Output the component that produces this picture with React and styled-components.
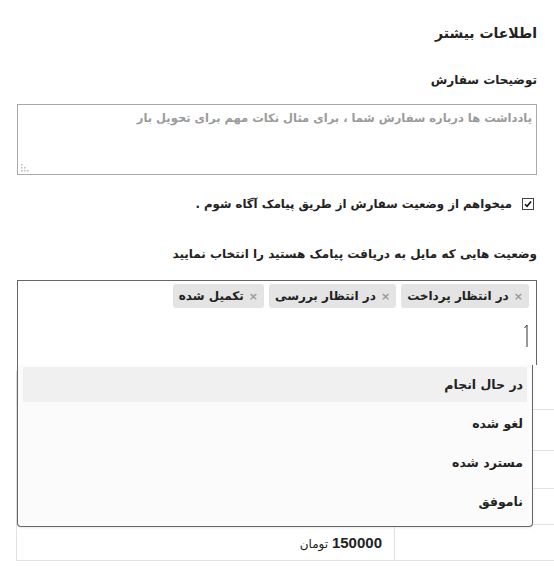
import React from "react";
import styled, { createGlobalStyle } from "styled-components";

const GlobalStyle = createGlobalStyle`
  html, body {
    margin: 0;
    padding: 0;
    background: #fff;
    overflow: hidden;
  }
  body {
    font-family: "DejaVu Sans", "Noto Sans", sans-serif;
    color: #222;
  }
`;

const Page = styled.div`
  direction: rtl;
  width: 520px;
  padding: 21px 17px 0 17px;
`;

const Title = styled.h3`
  margin: 0;
  font-size: 14px;
  line-height: 24px;
  font-weight: 700;
  color: #222;
`;

const FieldLabel = styled.label`
  display: block;
  margin: ${(p) => p.$mt || 0}px 0 0;
  font-size: 12px;
  line-height: 22px;
  font-weight: 700;
  color: #222;
`;

const AreaWrap = styled.div`
  position: relative;
  margin-top: 13px;
`;

const Notes = styled.textarea`
  display: block;
  box-sizing: border-box;
  width: 100%;
  height: 71px;
  margin: 0;
  padding: 3px 4px;
  border: 1px solid #aaa;
  border-radius: 0;
  resize: none;
  font-family: inherit;
  font-size: 11.5px;
  font-weight: 700;
  line-height: 20px;
  direction: rtl;
  &::placeholder {
    color: #9a9a9a;
  }
`;

const Grip = styled.svg`
  position: absolute;
  left: 4px;
  bottom: 3px;
`;

const CheckRow = styled.div`
  display: flex;
  align-items: center;
  gap: 10px;
  margin-top: 19px;
  padding-right: 3px;
  font-size: 11.7px;
  line-height: 20px;
  font-weight: 700;
`;

const Box = styled.span`
  display: inline-flex;
  align-items: center;
  justify-content: center;
  box-sizing: border-box;
  width: 12px;
  height: 12px;
  border: 1px solid #444;
  background: #fff;
`;

const SelectWrap = styled.div`
  position: relative;
  margin-top: 15px;
`;

const Selection = styled.div`
  box-sizing: border-box;
  height: 85px;
  border: 1px solid #666;
  border-bottom: none;
  padding: 3px 7px 0 5px;
`;

const Tags = styled.ul`
  display: flex;
  flex-wrap: wrap;
  gap: 5px;
  margin: 0;
  padding: 0;
  list-style: none;
`;

const Tag = styled.li`
  display: flex;
  align-items: center;
  gap: 5px;
  height: 24px;
  padding: 0 6px;
  border-radius: 3px;
  background: #e4e4e4;
  font-size: 12px;
  font-weight: 700;
  color: #222;
`;

const Remove = styled.span`
  font-size: 11px;
  color: #999;
  font-weight: 700;
`;

const SearchLine = styled.div`
  display: flex;
  height: 24px;
  margin-top: 16px;
`;

const Dropdown = styled.ul`
  position: absolute;
  top: 85px;
  left: 0;
  right: 4px;
  z-index: 5;
  margin: 0;
  padding: 2px 5px 7px;
  list-style: none;
  background: #fbfbfb;
  border: 1px solid #666;
  border-top: none;
  border-radius: 0 0 4px 4px;
  box-shadow: 0 1px 2px rgba(0, 0, 0, 0.08);
`;

const Option = styled.li`
  display: flex;
  align-items: center;
  height: 35px;
  margin-bottom: 4px;
  padding: 0 4px;
  font-size: 12.5px;
  font-weight: 700;
  color: #222;
  background: ${(p) => (p.$active ? "#f0f0f0" : "transparent")};
  &:last-child {
    margin-bottom: 0;
  }
`;

const Table = styled.table`
  width: 560px;
  margin: 6px -39px 0 0;
  border-collapse: collapse;
  direction: rtl;
  table-layout: fixed;
  tr:first-child td {
    border-top: none;
  }
`;

const Row = styled.tr`
  height: ${(p) => p.$h}px;
`;

const Cell = styled.td`
  box-sizing: border-box;
  width: ${(p) => p.$w || "auto"};
  padding: 0 12px;
  border: 1px solid #e2e2e2;
  font-size: 12px;
  color: #222;
  text-align: right;
`;

const Price = styled.span`
  font-family: "Liberation Sans", Arial, sans-serif;
  font-weight: 700;
  font-size: 15px;
`;

const tags = ["در انتظار پرداخت", "در انتظار بررسی", "تکمیل شده"];
const options = ["در حال انجام", "لغو شده", "مسترد شده", "ناموفق"];
const rowHeights = [38, 41, 38, 36];

function CheckIcon() {
  return (
    <svg width="8" height="8" viewBox="0 0 8 8">
      <path d="M1 4.2 L3.1 6.3 L7 1.6" fill="none" stroke="#111" strokeWidth="1.6" />
    </svg>
  );
}

function Caret() {
  return (
    <svg width="6" height="24" viewBox="0 0 6 24">
      <path d="M4 1 V23 M4 1 L1.5 4" fill="none" stroke="#333" strokeWidth="1" />
    </svg>
  );
}

export default function App() {
  return (
    <>
      <GlobalStyle />
      <Page>
        <Title>اطلاعات بیشتر</Title>
        <FieldLabel $mt={24}>توضیحات سفارش</FieldLabel>
        <AreaWrap>
          <Notes placeholder="یادداشت ها درباره سفارش شما ، برای مثال نکات مهم برای تحویل بار" />
          <Grip width="8" height="8" viewBox="0 0 8 8">
            <g fill="#bbb">
              <rect x="0" y="0" width="1.5" height="1.5" />
              <rect x="0" y="3" width="1.5" height="1.5" />
              <rect x="3" y="3" width="1.5" height="1.5" />
              <rect x="0" y="6" width="1.5" height="1.5" />
              <rect x="3" y="6" width="1.5" height="1.5" />
              <rect x="6" y="6" width="1.5" height="1.5" />
            </g>
          </Grip>
        </AreaWrap>
        <CheckRow>
          <Box>
            <CheckIcon />
          </Box>
          <span>میخواهم از وضعیت سفارش از طریق پیامک آگاه شوم .</span>
        </CheckRow>
        <FieldLabel $mt={29}>وضعیت هایی که مایل به دریافت پیامک هستید را انتخاب نمایید</FieldLabel>
        <SelectWrap>
          <Selection>
            <Tags>
              {tags.map((t) => (
                <Tag key={t}>
                  <Remove>×</Remove>
                  {t}
                </Tag>
              ))}
            </Tags>
            <SearchLine>
              <Caret />
            </SearchLine>
          </Selection>
          <Dropdown>
            {options.map((o, i) => (
              <Option key={o} $active={i === 0}>
                {o}
              </Option>
            ))}
          </Dropdown>
          <Table>
            <tbody>
              {rowHeights.map((h, i) => (
                <Row key={i} $h={h}>
                  <Cell $w="181px" />
                  <Cell />
                </Row>
              ))}
              <Row $h={36}>
                <Cell $w="181px" />
                <Cell>
                  <Price>150000</Price> تومان
                </Cell>
              </Row>
            </tbody>
          </Table>
        </SelectWrap>
      </Page>
    </>
  );
}
